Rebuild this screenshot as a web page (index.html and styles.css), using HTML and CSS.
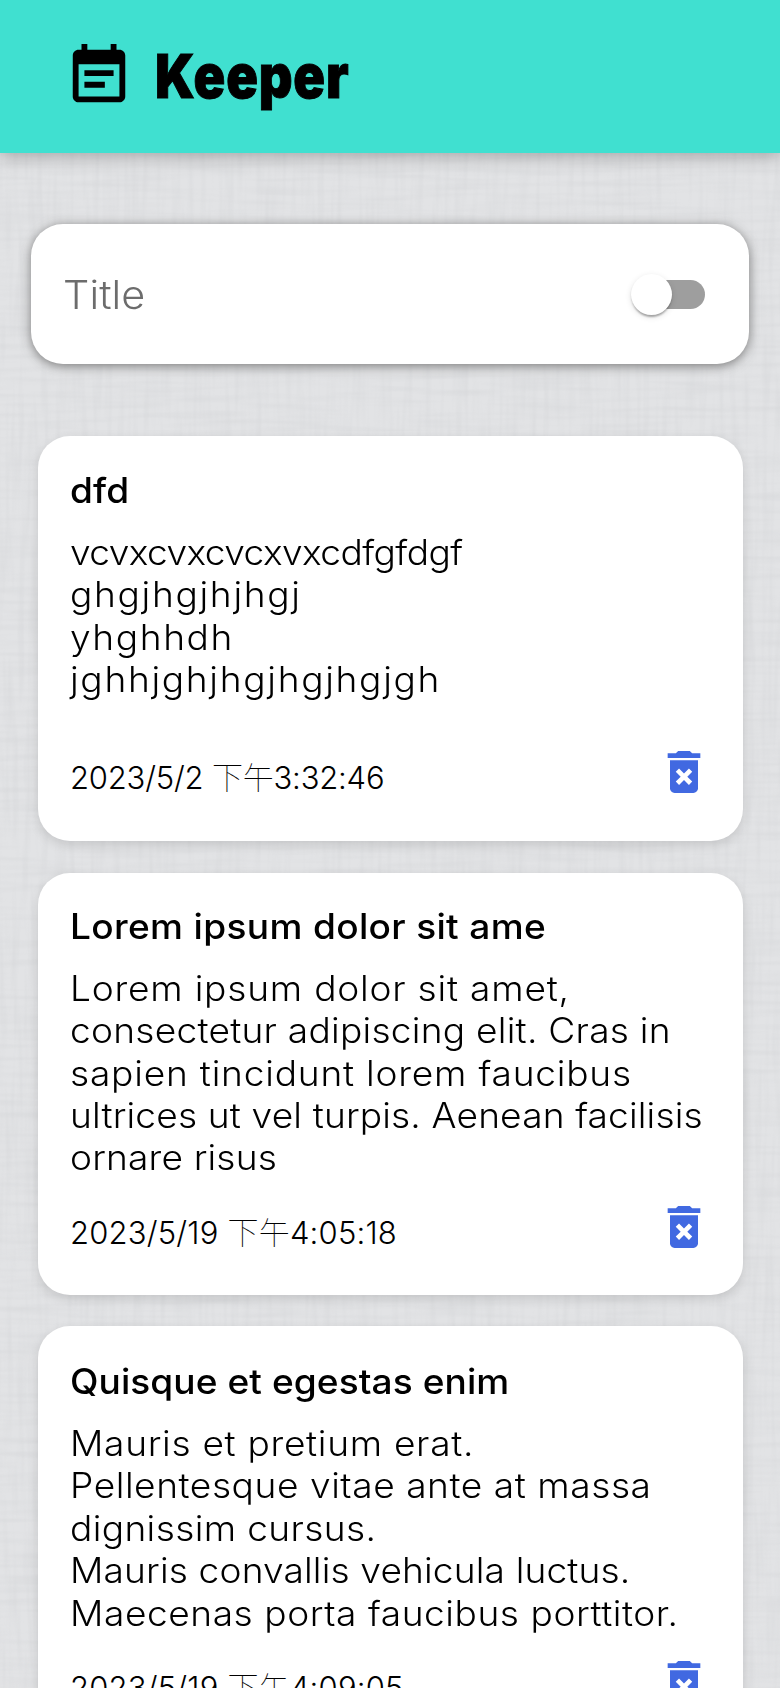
FILE: index.html
```html
<!DOCTYPE html>
<html lang="zh-Hant">
<head>
<meta charset="utf-8">
<title>Keeper</title>
<link rel="stylesheet" href="styles.css">
</head>
<body>
<svg class="linen" width="780" height="1688" aria-hidden="true">
  <filter id="weft" x="0" y="0" width="100%" height="100%">
    <feTurbulence type="fractalNoise" baseFrequency="0.012 0.16" numOctaves="2" seed="4"/>
    <feColorMatrix values="0 0 0 0 .5  0 0 0 0 .51  0 0 0 0 .53  .9 0 0 0 -.38"/>
  </filter>
  <filter id="warp" x="0" y="0" width="100%" height="100%">
    <feTurbulence type="fractalNoise" baseFrequency="0.16 0.012" numOctaves="2" seed="9"/>
    <feColorMatrix values="0 0 0 0 .5  0 0 0 0 .51  0 0 0 0 .53  .9 0 0 0 -.38"/>
  </filter>
  <rect width="780" height="1688" filter="url(#weft)"/>
  <rect width="780" height="1688" filter="url(#warp)"/>
</svg>
<svg class="defs" aria-hidden="true">
  <symbol id="trash" viewBox="0 0 24 24"><path d="M6 19c0 1.1.9 2 2 2h8c1.1 0 2-.9 2-2V7H6v12zm2.46-7.12l1.41-1.41L12 12.59l2.12-2.12 1.41 1.41L13.41 14l2.12 2.12-1.41 1.41L12 15.41l-2.12 2.12-1.41-1.41L10.59 14l-2.13-2.12zM15.5 4l-1-1h-5l-1 1H5v2h14V4z"/></symbol>
</svg>
<div class="app">
  <header class="header">
    <svg class="logo" viewBox="0 0 24 24"><path d="M17 10H7v2h10v-2zm2-7h-1V1h-2v2H8V1H6v2H5c-1.11 0-1.99.9-1.99 2L3 19c0 1.1.89 2 2 2h14c1.1 0 2-.9 2-2V5c0-1.1-.9-2-2-2zm0 16H5V8h14v11zm-5-5H7v2h7v-2z"/></svg>
    <h1 class="brand">Keeper</h1>
  </header>
  <form class="composer">
    <span class="placeholder">Title</span>
    <span class="switch"><span class="thumb"></span></span>
  </form>
  <main class="notes">
    <article class="note first">
      <h2 class="title">dfd</h2>
      <p class="text"><span>vcvxcvxcvcxvxcdfgfdgf</span><span>ghgjhgjhjhgj</span><span>yhghhdh</span><span>jghhjghjhgjhgjhgjgh</span></p>
      <footer class="meta"><time>2023/5/2 <i>下午</i>3:32:46</time><svg class="trash"><use href="#trash"/></svg></footer>
    </article>
    <article class="note second">
      <h2 class="title">Lorem ipsum dolor sit ame</h2>
      <p class="text"><span>Lorem ipsum dolor sit amet,</span><span>consectetur adipiscing elit. Cras in</span><span>sapien tincidunt lorem faucibus</span><span>ultrices ut vel turpis. Aenean facilisis</span><span>ornare risus</span></p>
      <footer class="meta"><time>2023/5/19 <i>下午</i>4:05:18</time><svg class="trash"><use href="#trash"/></svg></footer>
    </article>
    <article class="note third">
      <h2 class="title">Quisque et egestas enim</h2>
      <p class="text"><span>Mauris et pretium erat.</span><span>Pellentesque vitae ante at massa</span><span>dignissim cursus.</span><span>Mauris convallis vehicula luctus.</span><span>Maecenas porta faucibus porttitor.</span></p>
      <footer class="meta"><time>2023/5/19 <i>下午</i>4:09:05</time><svg class="trash"><use href="#trash"/></svg></footer>
    </article>
  </main>
</div>
</body>
</html>
```
FILE: styles.css
```css
* { box-sizing: border-box; }
html, body { height: 1688px; overflow: hidden; }
body {
  margin: 0;
  background: #e2e3e5;
  color: #000;
  font-family: Inter, "Noto Sans CJK TC", sans-serif;
  font-weight: 300;
}
.linen { position: absolute; inset: 0; opacity: .36; }
.defs { position: absolute; width: 0; height: 0; }
.app { position: relative; }

.header {
  display: flex;
  align-items: flex-start;
  height: 153px;
  padding: 41px 64px 0;
  background: #40e0d0;
  box-shadow: 0 2px 18px rgba(0, 0, 0, .3);
}
.logo { width: 70px; height: 70px; }
.brand {
  margin: -3px 0 0 21px;
  font-size: 61px;
  line-height: 76px;
  font-weight: 900;
  letter-spacing: 1px;
  transform: scaleX(.858);
  transform-origin: 0 0;
  -webkit-text-stroke: 1px #000;
}

.composer {
  display: flex;
  align-items: center;
  justify-content: space-between;
  width: 718px;
  height: 140px;
  margin: 71px 0 0 31px;
  padding: 0 44px 0 32px;
  border-radius: 32px;
  background: #fff;
  box-shadow: 0 2px 11px rgba(110, 110, 110, .9);
}
.placeholder {
  color: #6c6c6c;
  font-size: 39px;
  letter-spacing: .1px;
  transform: scaleX(1.06);
  transform-origin: 0 0;
}
.switch {
  display: flex;
  align-items: center;
  width: 71px;
  height: 29px;
  margin-top: 1px;
  border-radius: 15px;
  background: #9e9e9e;
}
.thumb {
  width: 41px;
  height: 41px;
  margin-left: -3px;
  border-radius: 50%;
  background: #fff;
  box-shadow: 0 4px 2px -2px rgba(0, 0, 0, .2), 0 2px 2px rgba(0, 0, 0, .14), 0 2px 6px rgba(0, 0, 0, .12);
}

.notes {
  display: flex;
  flex-direction: column;
  gap: 31.7px;
  padding: 72px 37px 0 38.4px;
}
.note {
  display: flex;
  flex-direction: column;
  height: 422px;
  padding: 31px 31px 0 31.6px;
  border-radius: 32px;
  background: #fff;
  box-shadow: 0 4px 11px rgba(0, 0, 0, .12);
}
.first { height: 405px; padding-top: 32px; }
.third { padding-top: 32.5px; }
.title {
  margin: 0;
  font-size: 35px;
  line-height: 44px;
  font-weight: 500;
  white-space: nowrap;
  transform: scaleX(1.06);
  transform-origin: 0 0;
}
.text { margin: 19px 0 0; }
.text span {
  display: block;
  font-size: 35px;
  line-height: 42.4px;
  white-space: nowrap;
  transform: scaleX(1.06);
  transform-origin: 0 0;
}
.meta {
  display: flex;
  justify-content: space-between;
  margin-top: 20px;
}
.first .meta { margin-top: 43px; }
time { padding-top: 12px; font-size: 31px; line-height: 40px; white-space: nowrap; letter-spacing: .2px; }
time i { font-family: "Noto Sans CJK TC", sans-serif; font-style: normal; font-weight: 100; }
.trash { width: 56px; height: 56px; fill: #4169e1; }

/* tracking per line */
.first time { letter-spacing: -.2px; }
.first .title { letter-spacing: .1px; }
.second .title { letter-spacing: .3px; }
.third .title { letter-spacing: .05px; }
.first span:nth-child(1) { letter-spacing: -.55px; }
.first span:nth-child(2) { letter-spacing: 1.58px; }
.first span:nth-child(3) { letter-spacing: 1.5px; }
.first span:nth-child(4) { letter-spacing: 1.58px; }
.second span:nth-child(1) { letter-spacing: .74px; }
.second span:nth-child(2) { letter-spacing: .23px; }
.second span:nth-child(3) { letter-spacing: .74px; }
.second span:nth-child(4) { letter-spacing: .14px; }
.second span:nth-child(5) { letter-spacing: .15px; }
.third span:nth-child(1) { letter-spacing: .65px; }
.third span:nth-child(2) { letter-spacing: .52px; }
.third span:nth-child(3) { letter-spacing: .34px; }
.third span:nth-child(4) { letter-spacing: .14px; }
.third span:nth-child(5) { letter-spacing: .52px; }
```
